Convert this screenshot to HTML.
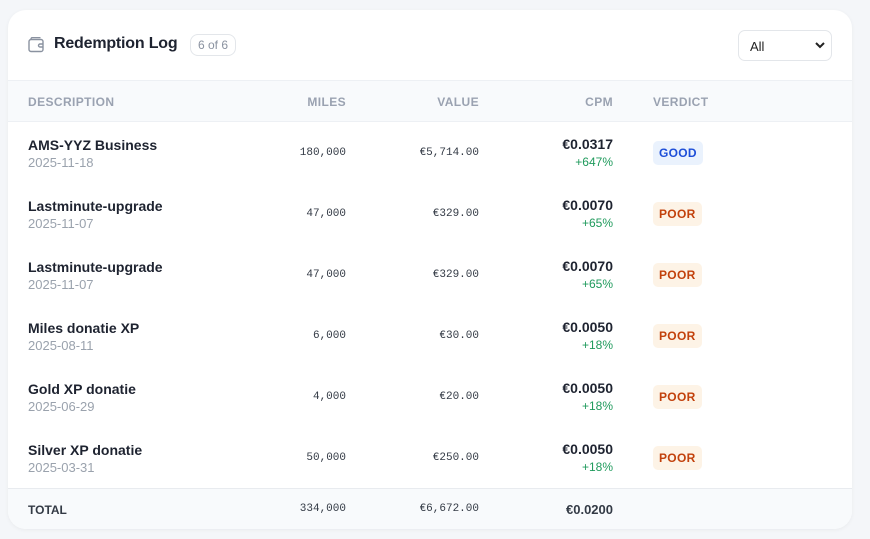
<!DOCTYPE html>
<html><head><style>
*{box-sizing:border-box;margin:0;padding:0}
body{width:870px;height:539px;background:#f4f6f9;font-family:"Liberation Sans",sans-serif;position:relative;overflow:hidden}
.card{position:absolute;left:8px;top:10px;width:844px;height:519px;background:#fff;border-radius:18px;overflow:hidden;box-shadow:0 1px 4px rgba(0,0,0,.05)}
.hdr{height:71px;border-bottom:1px solid #edf0f4;position:relative}
.title{position:absolute;left:46px;top:25px;font-weight:bold;font-size:16px;color:#1e2330;letter-spacing:-.2px}
.badge{position:absolute;left:182px;top:24px;border:1px solid #e3e6ea;border-radius:8px;padding:3px 7px;font-size:12px;color:#8a92a0}
.sel{position:absolute;left:730px;top:20px;width:94px;height:31px;border:1px solid #e3e6ea;border-radius:7px;font-size:13px;color:#222;padding:8px 11px}
.th{position:absolute;top:71px;left:0;width:844px;height:41px;background:#f8fafc;border-bottom:1px solid #edf0f4}
.h{position:absolute;top:14px;font-size:12px;font-weight:bold;color:#9aa2b1;letter-spacing:.4px}
.row{position:absolute;left:0;width:844px;height:61px}
.d{position:absolute;left:20px;top:15px;font-size:14px;font-weight:bold;color:#1e2330}
.dt{position:absolute;left:20px;top:33px;font-size:13px;color:#9aa2ad}
.m{position:absolute;font-family:"Liberation Mono",monospace;font-size:11px;color:#333a45;top:25px}
.c{position:absolute;right:239px;top:14px;font-size:14px;font-weight:bold;color:#1e2330;text-align:right}
.p{position:absolute;right:239px;top:33px;font-size:12px;color:#1f9a5c}
.v{position:absolute;left:645px;top:19px;padding:5px 6px;border-radius:5px;font-size:12px;font-weight:bold;letter-spacing:.3px}
.poor{background:#fdf3e6;color:#c2410c}.good{background:#eaf2fd;color:#1d4ed8}
.tot{position:absolute;left:0;top:478px;width:844px;height:41px;background:#f8fafc;border-top:1px solid #e8ebef}
</style></head><body>
<div class="card">
<div class="hdr">
<svg style="position:absolute;left:20px;top:27px" width="17" height="16" viewBox="0 0 17 16" fill="none" stroke="#8a92a0" stroke-width="1.4"><rect x="1" y="2.5" width="14" height="12" rx="2"/><path d="M3 2.5V2a1.5 1.5 0 0 1 1.5-1.5h8"/><path d="M15 7h-3a1.5 1.5 0 0 0 0 3h3"/></svg>
<div class="title">Redemption Log</div><div class="badge">6 of 6</div>
<div class="sel">All<svg style="position:absolute;right:6px;top:11px" width="10" height="7" viewBox="0 0 10 7"><path d="M1 1l4 4 4-4" stroke="#222" stroke-width="2" fill="none"/></svg></div>
</div>
<div class="th"><span class="h" style="left:20px">DESCRIPTION</span><span class="h" style="right:506px">MILES</span><span class="h" style="right:373px">VALUE</span><span class="h" style="right:239px">CPM</span><span class="h" style="left:645px">VERDICT</span></div>

<div class="row" style="top:112px"><div class="d">AMS-YYZ Business</div><div class="dt">2025-11-18</div><div class="m" style="right:506px">180,000</div><div class="m" style="right:373px">€5,714.00</div><div class="c">€0.0317</div><div class="p">+647%</div><div class="v good">GOOD</div></div>
<div class="row" style="top:173px"><div class="d">Lastminute-upgrade</div><div class="dt">2025-11-07</div><div class="m" style="right:506px">47,000</div><div class="m" style="right:373px">€329.00</div><div class="c">€0.0070</div><div class="p">+65%</div><div class="v poor">POOR</div></div>
<div class="row" style="top:234px"><div class="d">Lastminute-upgrade</div><div class="dt">2025-11-07</div><div class="m" style="right:506px">47,000</div><div class="m" style="right:373px">€329.00</div><div class="c">€0.0070</div><div class="p">+65%</div><div class="v poor">POOR</div></div>
<div class="row" style="top:295px"><div class="d">Miles donatie XP</div><div class="dt">2025-08-11</div><div class="m" style="right:506px">6,000</div><div class="m" style="right:373px">€30.00</div><div class="c">€0.0050</div><div class="p">+18%</div><div class="v poor">POOR</div></div>
<div class="row" style="top:356px"><div class="d">Gold XP donatie</div><div class="dt">2025-06-29</div><div class="m" style="right:506px">4,000</div><div class="m" style="right:373px">€20.00</div><div class="c">€0.0050</div><div class="p">+18%</div><div class="v poor">POOR</div></div>
<div class="row" style="top:417px"><div class="d">Silver XP donatie</div><div class="dt">2025-03-31</div><div class="m" style="right:506px">50,000</div><div class="m" style="right:373px">€250.00</div><div class="c">€0.0050</div><div class="p">+18%</div><div class="v poor">POOR</div></div>

<div class="tot"><span style="position:absolute;left:20px;top:14px;font-size:12px;font-weight:bold;color:#333a45">TOTAL</span><span class="m" style="right:506px;top:14px">334,000</span><span class="m" style="right:373px;top:14px">€6,672.00</span><span style="position:absolute;right:239px;top:13px;font-size:13px;font-weight:bold;color:#333a45">€0.0200</span></div>
</div>
</body></html>
